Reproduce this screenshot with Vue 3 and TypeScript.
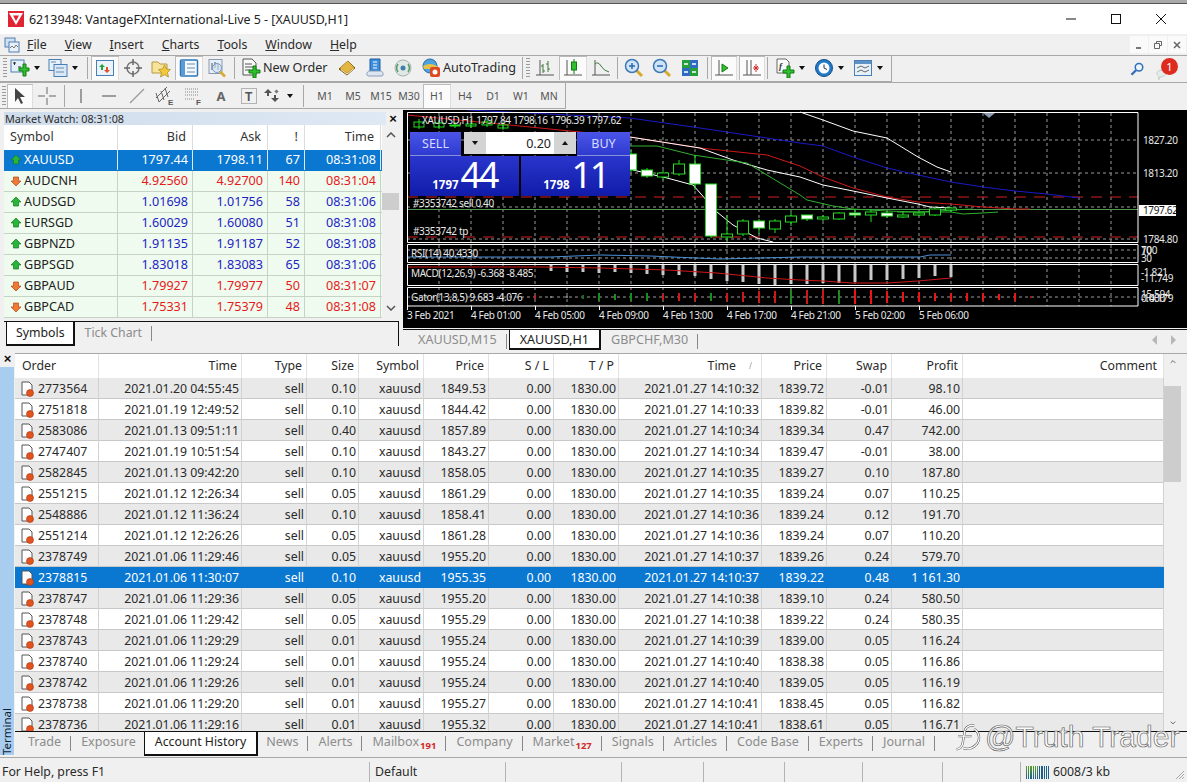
<script setup lang="ts">
const menus = [
  ['F', 'ile'], ['V', 'iew'], ['I', 'nsert'], ['C', 'harts'], ['T', 'ools'], ['W', 'indow'], ['H', 'elp'],
]
const periods = ['M1', 'M5', 'M15', 'M30', 'H1', 'H4', 'D1', 'W1', 'MN']

const quotes = [
  { s: 'XAUUSD', b: '1797.44', a: '1798.11', d: 67, t: '08:31:08', up: true, sel: true },
  { s: 'AUDCNH', b: '4.92560', a: '4.92700', d: 140, t: '08:31:04', up: false },
  { s: 'AUDSGD', b: '1.01698', a: '1.01756', d: 58, t: '08:31:06', up: true },
  { s: 'EURSGD', b: '1.60029', a: '1.60080', d: 51, t: '08:31:08', up: true },
  { s: 'GBPNZD', b: '1.91135', a: '1.91187', d: 52, t: '08:31:08', up: true },
  { s: 'GBPSGD', b: '1.83018', a: '1.83083', d: 65, t: '08:31:06', up: true },
  { s: 'GBPAUD', b: '1.79927', a: '1.79977', d: 50, t: '08:31:07', up: false },
  { s: 'GBPCAD', b: '1.75331', a: '1.75379', d: 48, t: '08:31:08', up: false },
]

// order, open time, size, price, close time, close price, swap, profit
const history = [
  ['2773564', '2021.01.20 04:55:45', '0.10', '1849.53', '14:10:32', '1839.72', '-0.01', '98.10'],
  ['2751818', '2021.01.19 12:49:52', '0.10', '1844.42', '14:10:33', '1839.82', '-0.01', '46.00'],
  ['2583086', '2021.01.13 09:51:11', '0.40', '1857.89', '14:10:34', '1839.34', '0.47', '742.00'],
  ['2747407', '2021.01.19 10:51:54', '0.10', '1843.27', '14:10:34', '1839.47', '-0.01', '38.00'],
  ['2582845', '2021.01.13 09:42:20', '0.10', '1858.05', '14:10:35', '1839.27', '0.10', '187.80'],
  ['2551215', '2021.01.12 12:26:34', '0.05', '1861.29', '14:10:35', '1839.24', '0.07', '110.25'],
  ['2548886', '2021.01.12 11:36:24', '0.10', '1858.41', '14:10:36', '1839.24', '0.12', '191.70'],
  ['2551214', '2021.01.12 12:26:26', '0.05', '1861.28', '14:10:36', '1839.24', '0.07', '110.20'],
  ['2378749', '2021.01.06 11:29:46', '0.05', '1955.20', '14:10:37', '1839.26', '0.24', '579.70'],
  ['2378815', '2021.01.06 11:30:07', '0.10', '1955.35', '14:10:37', '1839.22', '0.48', '1 161.30'],
  ['2378747', '2021.01.06 11:29:36', '0.05', '1955.20', '14:10:38', '1839.10', '0.24', '580.50'],
  ['2378748', '2021.01.06 11:29:42', '0.05', '1955.29', '14:10:38', '1839.22', '0.24', '580.35'],
  ['2378743', '2021.01.06 11:29:29', '0.01', '1955.24', '14:10:39', '1839.00', '0.05', '116.24'],
  ['2378740', '2021.01.06 11:29:24', '0.01', '1955.24', '14:10:40', '1838.38', '0.05', '116.86'],
  ['2378742', '2021.01.06 11:29:26', '0.01', '1955.24', '14:10:40', '1839.05', '0.05', '116.19'],
  ['2378738', '2021.01.06 11:29:20', '0.01', '1955.27', '14:10:41', '1838.45', '0.05', '116.82'],
  ['2378736', '2021.01.06 11:29:16', '0.01', '1955.32', '14:10:41', '1838.61', '0.05', '116.71'],
]

const termTabs = [
  { n: 'Trade' }, { n: 'Exposure' }, { n: 'Account History', on: true }, { n: 'News' }, { n: 'Alerts' },
  { n: 'Mailbox', c: '191' }, { n: 'Company' }, { n: 'Market', c: '127' }, { n: 'Signals' }, { n: 'Articles' },
  { n: 'Code Base' }, { n: 'Experts' }, { n: 'Journal' },
]

// chart, in page pixels (the svg viewBox starts at the chart's page corner)
const gridX = Array.from({ length: 22 }, (_, i) => 439 + i * 32)
const ticks = [
  [407, '3 Feb 2021'], [471, '4 Feb 01:00'], [535, '4 Feb 05:00'], [599, '4 Feb 09:00'], [663, '4 Feb 13:00'],
  [727, '4 Feb 17:00'], [791, '4 Feb 21:00'], [855, '5 Feb 02:00'], [919, '5 Feb 06:00'],
] as [number, string][]

const lines = [
  { c: '#ffffff', p: '800,112 823,120 853,131 887,138 918,157 937,167 951,172' },
  { c: '#1a1ac8', p: '467,110 630,118 700,128 800,143 823,146 853,157 887,168 918,175 951,182 983,187 1015,191 1047,194 1079,198' },
  { c: '#d01818', p: '407,115 520,126 630,137 700,148 767,155 800,166 823,177 853,188 887,197 918,202 951,204 983,207 1015,209 1030,209' },
  { c: '#ffffff', p: '630,137 700,148 733,160 767,170 800,177 823,185 853,191 887,198 918,204 930,207 951,208' },
  { c: '#ffffff', p: '633,170 667,178 693,185 717,212 733,225 757,238 773,242' },
  { c: '#30b030', p: '630,146 657,146 693,155 747,163 767,175 800,195 807,200 833,206 853,209 887,211 918,212 940,211 951,210 973,209' },
  { c: '#30b030', p: '897,212 951,212 963,214 983,213 998,212' },
]

// x, wick top, wick bottom, body top, body bottom, bull (white fill)
const candles: [number, number, number, number, number, boolean][] = [
  [631, 150, 172, 154, 170, true], [647, 168, 178, 170, 176, true], [663, 170, 180, 173, 177, false],
  [679, 160, 176, 164, 174, false], [695, 155, 190, 164, 184, true], [711, 184, 238, 184, 236, true],
  [727, 215, 241, 234, 237, false], [743, 219, 236, 221, 234, false], [759, 219, 234, 221, 228, true],
  [775, 219, 233, 221, 229, false], [791, 212, 226, 216, 222, false], [807, 215, 221, 215, 219, true],
  [823, 215, 221, 217, 219, false], [839, 212, 220, 213, 219, false], [855, 209, 217, 213, 215, true],
  [871, 209, 222, 212, 215, false], [887, 211, 218, 213, 216, true], [903, 211, 218, 215, 217, false],
  [919, 212, 216, 213, 215, false], [935, 207, 216, 209, 215, false], [951, 207, 212, 208, 210, false],
]
const topCandles = [[419, 122, 127], [439, 123, 127], [455, 125, 126], [471, 124, 126], [487, 122, 125], [503, 125, 128]]

const macd = [6, 7, 7, 8, 7, 8, 9, 10, 10, 11, 14, 16, 17, 19, 20, 19, 19, 18, 18, 17, 15, 15, 14, 13, 11, 12]
// x, half height, colour
const gator: [number, number, string][] = [
  [535, 2, '#c02020'], [551, 1, '#777'], [567, 1, '#777'], [583, 2, '#1c6b1c'], [599, 4, '#1c8b1c'],
  [615, 3, '#1c8b1c'], [631, 4, '#1c8b1c'], [647, 4, '#1c8b1c'], [663, 3, '#d01818'], [679, 4, '#d01818'],
  [695, 4, '#d01818'], [711, 4, '#1c8b1c'], [727, 4, '#d01818'], [743, 5, '#d01818'], [759, 6, '#d01818'],
  [775, 6, '#d01818'], [791, 7, '#1c8b1c'], [807, 7, '#d01818'], [823, 7, '#d01818'], [839, 7, '#1c8b1c'],
  [855, 7, '#ee1414'], [871, 7, '#ee1414'], [887, 6, '#ee1414'], [903, 5, '#ee1414'], [919, 5, '#ee1414'],
  [935, 4, '#ee1414'], [951, 4, '#ee1414'], [967, 4, '#ee1414'], [983, 4, '#ee1414'], [999, 3, '#ee1414'],
  [1015, 4, '#ee1414'], [1031, 1, '#a01818'],
]
const meterBars = Array.from({ length: 11 }, (_, i) => i)
</script>

<template>
  <div class="app">
    <div class="strip"></div>

    <header class="title">
      <svg class="logo" viewBox="0 0 16 16"><rect width="16" height="16" fill="#e02433" /><path d="M1 2h14L8 14zM5 4.500h6L8 10z" fill="#fff" fill-rule="evenodd" /></svg>
      <span>6213948: VantageFXInternational-Live 5 - [XAUUSD,H1]</span>
      <div class="winbtns">
        <svg viewBox="0 0 12 12"><path d="M1 6h10" stroke="#111" /></svg>
        <svg viewBox="0 0 12 12"><rect x="1.500" y="1.500" width="9" height="9" fill="none" stroke="#111" /></svg>
        <svg viewBox="0 0 12 12"><path d="M1 1l10 10M11 1L1 11" stroke="#111" /></svg>
      </div>
    </header>

    <nav class="menubar">
      <svg class="menu-ic" viewBox="0 0 16 16"><rect x="1" y="1" width="10" height="9" fill="#cfe0f2" stroke="#4f7fb0" /><rect x="5" y="5" width="10" height="10" fill="#e8f1fa" stroke="#4f7fb0" /><path d="M6 11l2-2 2 2 2-3 2 2" fill="none" stroke="#777" /></svg>
      <span v-for="m in menus" :key="m[0]" class="menu"><u>{{ m[0] }}</u>{{ m[1] }}</span>
      <div class="mdi">
        <span><svg viewBox="0 0 10 10"><path d="M2 8h5" stroke="#777" stroke-width="2" /></svg></span>
        <span><svg viewBox="0 0 10 10"><path d="M3.500 3V1.500h5v4H7M1.500 3.500h5v5h-5z" fill="none" stroke="#666" /></svg></span>
        <span><svg viewBox="0 0 10 10"><path d="M2 2l6 6M8 2L2 8" stroke="#666" stroke-width="1.500" /></svg></span>
      </div>
    </nav>

    <div class="bar-row">
      <div class="toolbar t1">
        <i class="grip"></i>
        <div class="tb w34">
          <svg viewBox="0 0 20 20"><rect x="1" y="2" width="13" height="12" fill="#e6f0fa" stroke="#4a7fb5" /><path d="M3 5h3M4.500 4v3M8 9h3" stroke="#333" /><path d="M10 9h4v-4h3v4h3v3h-3v5h-3v-5h-4z" transform="translate(-1 1)" fill="#2fc02f" stroke="#137a13" /></svg>
          <b class="drop"></b>
        </div>
        <div class="tb w40">
          <svg viewBox="0 0 20 20"><rect x="1" y="1.500" width="12" height="11" fill="#e6f0fa" stroke="#4a7fb5" /><rect x="6" y="6.500" width="13" height="12" fill="#d8e8f8" stroke="#4a7fb5" /><path d="M3 4h5M8 10h8M8 14h8" stroke="#6a8aaa" /></svg>
          <b class="drop"></b>
        </div>
        <i class="sep"></i>
        <div class="tb on">
          <svg viewBox="0 0 20 20"><rect x="1.500" y="2.500" width="17" height="15" fill="#eaf3fb" stroke="#4a7fb5" /><path d="M7 6l3 3H8v3H6V9H4z" fill="#1fa53a" /><path d="M12 15l-3-3h2V9h2v3h2z" fill="#e2502a" /></svg>
        </div>
        <div class="tb">
          <svg viewBox="0 0 20 20"><circle cx="10" cy="10" r="6" fill="none" stroke="#777" stroke-width="1.500" /><path d="M10 1v6M10 13v6M1 10h6M13 10h6" stroke="#666" stroke-width="1.500" /></svg>
        </div>
        <div class="tb">
          <svg viewBox="0 0 20 20"><path d="M1 4h6l2 2h7v9H1z" fill="#f7e39a" stroke="#b79a45" /><path d="M13.500 7l2 4 4 .500-3 3 1 4.500-4-2.300-4 2.300 1-4.500-3-3 4-.5z" fill="#f4c83a" stroke="#a98a20" stroke-width=".7" /></svg>
        </div>
        <div class="tb on">
          <svg viewBox="0 0 20 20"><rect x="1.500" y="2" width="17" height="16" rx="1" fill="#f4f9fe" stroke="#2f76b8" stroke-width="1.500" /><path d="M2 2.500h4v15H2z" fill="#5a9ad6" /><path d="M8 6h8M8 10h8M8 14h8" stroke="#6c8aa8" /></svg>
        </div>
        <div class="tb">
          <svg viewBox="0 0 20 20"><rect x="2" y="1.500" width="13" height="14" fill="#e8eef6" stroke="#8a9ab0" /><path d="M5 5v7M8 4v6M11 6v6" stroke="#555" /><circle cx="10" cy="10" r="4.500" fill="#d0e4f6" fill-opacity=".6" stroke="#6f9cc8" /><path d="M13 13.500l5 5" stroke="#d7a92e" stroke-width="2.500" /></svg>
        </div>
        <i class="sep"></i>
        <div class="tb label w95">
          <svg viewBox="0 0 20 20"><path d="M2 1h9l4 4v12H2z" fill="#f8f8f8" stroke="#555" /><path d="M4 6h7M4 9h9M4 12h5" stroke="#555" /><path d="M8 11h4V7h3v4h4v3h-4v5h-3v-5H8z" transform="translate(0 1)" fill="#2fc02f" stroke="#137a13" /></svg>
          <span>New Order</span>
        </div>
        <div class="tb">
          <svg viewBox="0 0 20 20"><path d="M11 3l7 7-8 7-8-6z" fill="#9a7420" stroke="#7a5a14" /><path d="M11 3l6 6.500-7 5.500-7-5z" fill="#e3b543" /><path d="M4 11.500l6 4.500 7-5.500" fill="none" stroke="#fff2c0" /></svg>
        </div>
        <div class="tb">
          <svg viewBox="0 0 20 20"><path d="M5 1h10v12H5z" fill="#3d8fdd" stroke="#1c5da0" /><path d="M8 4h4M8 7h4M8 10h4" stroke="#fff" /><path d="M2 17a3 3 0 0 1 3-4h10a3 3 0 0 1 3 4q0 1-2 1H4q-2 0-2-1z" fill="#dbe6f2" stroke="#8aa0b8" /></svg>
        </div>
        <div class="tb">
          <svg viewBox="0 0 20 20"><circle cx="10" cy="10" r="8" fill="#dfe8e4" stroke="#a4b4ac" /><path d="M5 6a7 7 0 0 0 0 8M15 6a7 7 0 0 1 0 8" fill="none" stroke="#5a9a6a" stroke-width="1.500" /><circle cx="10" cy="10" r="2.500" fill="#3f7fb0" /></svg>
        </div>
        <div class="tb label w102">
          <svg viewBox="0 0 20 20"><circle cx="9" cy="8" r="7" fill="#4da3dd" stroke="#2b6a9e" /><path d="M2 8q7-4 14 0l-1 3H3z" fill="#e7c24a" /><rect x="9" y="9" width="10" height="10" rx="2" fill="#e0481f" /><circle cx="14" cy="14" r="2.500" fill="#fff" /></svg>
          <span>AutoTrading</span>
        </div>
        <i class="sep"></i>
        <i class="grip thin"></i>
        <div class="tb">
          <svg viewBox="0 0 20 20"><path d="M5 2v15M1 17h18" stroke="#555" /><path d="M8 6v9M6 8h2M8 13h2M13 3v11M11 6h2M13 11h2" stroke="#3a7a3a" /></svg>
        </div>
        <div class="tb on">
          <svg viewBox="0 0 20 20"><path d="M4 2v15M1 17h18" stroke="#555" /><path d="M11 1v15" stroke="#137a13" /><rect x="8.500" y="4" width="5" height="8" fill="#2fc02f" stroke="#137a13" /></svg>
        </div>
        <div class="tb">
          <svg viewBox="0 0 20 20"><path d="M4 2v15M1 17h18" stroke="#555" /><path d="M4 6q3-3 6 2t8 6" fill="none" stroke="#3a7a3a" /></svg>
        </div>
        <i class="sep n"></i>
        <div class="tb">
          <svg viewBox="0 0 20 20"><path d="M12 12l6 6" stroke="#d7a92e" stroke-width="3" /><circle cx="8" cy="8" r="6.500" fill="#cfe4f8" stroke="#3d78b5" stroke-width="1.500" /><path d="M5 8h6M8 5v6" stroke="#2b68a8" stroke-width="1.500" /></svg>
        </div>
        <div class="tb">
          <svg viewBox="0 0 20 20"><path d="M12 12l6 6" stroke="#d7a92e" stroke-width="3" /><circle cx="8" cy="8" r="6.500" fill="#cfe4f8" stroke="#3d78b5" stroke-width="1.500" /><path d="M5 8h6" stroke="#2b68a8" stroke-width="1.500" /></svg>
        </div>
        <div class="tb">
          <svg viewBox="0 0 20 20"><rect x="2" y="2" width="8" height="8" fill="#26a03a" /><rect x="10" y="2" width="8" height="8" fill="#2d6cc0" /><rect x="2" y="10" width="8" height="8" fill="#2d6cc0" /><rect x="10" y="10" width="8" height="8" fill="#26a03a" /><path d="M4 6h4M12 6h4M4 14h4M12 14h4" stroke="#fff" stroke-width="1.500" /></svg>
        </div>
        <i class="sep"></i>
        <div class="tb on w26">
          <svg viewBox="0 0 20 20"><path d="M5 2v15M1 17h18" stroke="#555" /><path d="M8 6l6 4-6 4z" fill="#2fc02f" stroke="#137a13" /></svg>
        </div>
        <div class="tb on w26 mleft">
          <svg viewBox="0 0 20 20"><path d="M5 2v15M1 17h18M9 2v15" stroke="#555" /><path d="M14 6v8M11 10h6M12 8l4 4M16 8l-4 4" stroke="#c82a2a" /></svg>
        </div>
        <i class="sep n"></i>
        <div class="tb w39">
          <svg viewBox="0 0 20 20"><path d="M2 1h9l3 3v11H2z" fill="#fafafa" stroke="#666" /><text x="4" y="11" class="fx">f</text><path d="M9 11h4V7h3v4h4v3h-4v5h-3v-5H9z" transform="translate(-1 1)" fill="#2fc02f" stroke="#137a13" /></svg>
          <b class="drop"></b>
        </div>
        <div class="tb w39">
          <svg viewBox="0 0 20 20"><circle cx="10" cy="10" r="8.500" fill="#1f78c8" stroke="#12508c" /><circle cx="10" cy="10" r="5.500" fill="#f8fbff" /><path d="M10 6.500V10l3 1.500" fill="none" stroke="#333" /></svg>
          <b class="drop"></b>
        </div>
        <div class="tb w39">
          <svg viewBox="0 0 20 20"><rect x="1.500" y="2.500" width="17" height="15" fill="#e8f1f8" stroke="#4a7fb5" /><path d="M2 3h16v3H2z" fill="#5d93c6" /><path d="M4 10l4-2 4 2 4-2M4 14l4-2 4 2 4-2" fill="none" stroke="#666" /></svg>
          <b class="drop"></b>
        </div>
      </div>
      <div class="tray">
        <svg class="tray-s" viewBox="0 0 20 20"><circle cx="12" cy="7" r="5" fill="#eef5fc" stroke="#2f6fb8" stroke-width="2" /><path d="M8 11l-6 6" stroke="#2f6fb8" stroke-width="3" /></svg>
        <div class="bubble">
          <svg viewBox="0 0 24 24"><path d="M2 12a7 6 0 0 1 13 0 7 6 0 0 1-8 5l-2 4v-5a6 6 0 0 1-3-4z" fill="#e4ecec" stroke="#b8c4c4" /></svg>
          <span>1</span>
        </div>
      </div>
    </div>

    <div class="bar-row">
      <div class="toolbar t2">
        <i class="grip small"></i>
        <div class="tb on w26">
          <svg viewBox="0 0 20 20"><path d="M5 2l10 9h-5l3 6-2 1-3-6-3 4z" fill="#444" /></svg>
        </div>
        <div class="tb">
          <svg viewBox="0 0 20 20"><path d="M10 1v7M10 12v7M1 10h7M12 10h7" stroke="#666" /></svg>
        </div>
        <i class="sep line6"></i>
        <div class="tb"><svg viewBox="0 0 20 20"><path d="M10 3v14" stroke="#666" stroke-width="1.200" /></svg></div>
        <div class="tb"><svg viewBox="0 0 20 20"><path d="M3 10h14" stroke="#666" stroke-width="1.200" /></svg></div>
        <div class="tb"><svg viewBox="0 0 20 20"><path d="M3 17L17 3" stroke="#999" stroke-width="1.200" /></svg></div>
        <div class="tb">
          <svg viewBox="0 0 20 20"><path d="M1 12L12 1M4 16L15 5M1 7l3 9M6 5l3 9M10 2l3 9" stroke="#666" /><text x="13" y="19" class="mini">E</text></svg>
        </div>
        <div class="tb">
          <svg viewBox="0 0 20 20"><path d="M2 3h14M2 6h14M2 9h14M2 13h10" stroke="#888" stroke-dasharray="1 1" /><text x="13" y="19" class="mini">F</text></svg>
        </div>
        <div class="tb"><span class="tool-a">A</span></div>
        <div class="tb">
          <svg viewBox="0 0 20 20"><rect x="2.500" y="2.500" width="15" height="15" fill="none" stroke="#777" stroke-dasharray="1 1" /><text x="6" y="15" class="tool-t">T</text></svg>
        </div>
        <div class="tb w38">
          <svg viewBox="0 0 20 20"><path d="M5 3l4 4H6v3H4V7H1z" fill="#555" /><path d="M12 16l-4-4h3V9h2v3h3z" fill="#555" /><rect x="12" y="4" width="3" height="3" transform="rotate(45 13.500 5.500)" fill="#777" /></svg>
          <b class="drop"></b>
        </div>
        <i class="sep wide"></i>
        <div v-for="p in periods" :key="p" class="tb period" :class="{ on: p === 'H1' }">{{ p }}</div>
      </div>
    </div>

    <section class="upper">
      <div class="market">
        <div class="caption">
          <span>Market Watch: 08:31:08</span>
          <b class="x">×</b>
        </div>
        <div class="mw-wrap">
          <div class="mw-table">
            <div class="mw-row mw-head">
              <span class="left">Symbol</span><span>Bid</span><span>Ask</span><span>!</span><span>Time</span>
            </div>
            <div v-for="q in quotes" :key="q.s" class="mw-row" :class="[q.up ? 'blue' : 'red', { sel: q.sel }]">
              <span class="left sym">
                <svg viewBox="0 0 12 12">
                  <path v-if="q.up" d="M6 1l5 5H8.500v4h-5V6H1z" fill="#29b53a" stroke="#137a22" stroke-width=".7" />
                  <path v-else d="M6 11L1 6h2.500V2h5v4H11z" fill="#ef7a36" stroke="#b5461a" stroke-width=".7" />
                </svg>
                <em>{{ q.s }}</em>
              </span>
              <span>{{ q.b }}</span><span>{{ q.a }}</span><span>{{ q.d }}</span><span>{{ q.t }}</span>
            </div>
          </div>
          <div class="vscroll mw-scroll">
            <svg viewBox="0 0 10 6"><path d="M1 5l4-4 4 4" fill="none" stroke="#555" stroke-width="1.500" /></svg>
            <div class="track"><div class="thumb"></div></div>
            <svg viewBox="0 0 10 6"><path d="M1 1l4 4 4-4" fill="none" stroke="#555" stroke-width="1.500" /></svg>
          </div>
        </div>
        <div class="tabs mw-tabs">
          <span class="tab on">Symbols</span>
          <span class="tab">Tick Chart</span>
        </div>
      </div>

      <div class="chart-col">
        <div class="chart">
          <svg class="plot" viewBox="403 110 784 218">
            <g class="grid">
              <line v-for="x in gridX" :key="x" :x1="x" :x2="x" y1="113" y2="306" />
              <line v-for="y in [140, 173, 207, 239, 250, 258, 297]" :key="y" x1="407" x2="1138" :y1="y" :y2="y" />
            </g>
            <path d="M407 197H1138M407 237H1138" stroke="#d02020" stroke-dasharray="11 8" />
            <path d="M407 209.500H1138" stroke="#4f9a4f" />
            <polyline v-for="(l, i) in lines" :key="i" :points="l.p" fill="none" :stroke="l.c" />
            <g v-for="t in topCandles" :key="t[0]" stroke="#22dd22">
              <rect :x="t[0] - 5" :y="t[1]" width="10" :height="t[2] - t[1]" fill="none" />
              <path :d="`M${t[0]} ${t[1] - 3}V${t[2] + 2}`" />
            </g>
            <g v-for="c in candles" :key="c[0]" stroke="#22dd22">
              <path :d="`M${c[0]} ${c[1]}V${c[2]}`" />
              <rect :x="c[0] - 5.500" :y="c[3]" width="11" :height="c[4] - c[3]" :fill="c[5] ? '#fff' : '#000'" />
            </g>
            <path d="M407 257H550L600 255 650 256 720 259 800 257 920 257 930 255H951" fill="none" stroke="#4a90d8" />
            <rect v-for="(h, i) in macd" :key="i" :x="549.500 + i * 16" y="265" width="3" :height="h" fill="#c8c8c8" />
            <polyline points="407,267 543,267 600,268 667,270 717,273 767,278 800,280 823,281 853,283 887,283 918,281 951,278" fill="none" stroke="#d01818" />
            <rect v-for="g in gator" :key="g[0]" :x="g[0] - 1" :y="297 - g[1]" width="2" :height="g[1] * 2" :fill="g[2]" />
            <path d="M407.500 112.500H1138V242.500H407.500zM407.500 244.500H1138V262.500H407.500zM407.500 264.500H1138V285.500H407.500zM407.500 287.500H1138V306H407.500z" fill="none" stroke="#fff" />
            <path d="M983 113l6 5 6-5z" fill="#8a9ab0" />

            <g class="lbl">
              <text x="422" y="124">XAUUSD,H1  1797.84 1798.16 1796.39 1797.62</text>
              <text x="413" y="207">#3353742 sell 0.40</text>
              <text x="413" y="235">#3353742 tp</text>
              <text x="411" y="257">RSI(14) 40.4330</text>
              <text x="411" y="277">MACD(12,26,9) -6.368 -8.485</text>
              <text x="411" y="301">Gator(13,8,5) 9.683 -4.076</text>
              <text x="1143" y="144">1827.20</text>
              <text x="1143" y="177">1813.20</text>
              <text x="1143" y="243">1784.80</text>
              <text x="1141" y="254">100</text>
              <text x="1141" y="254">70</text>
              <text x="1141" y="262">30</text>
              <text x="1141" y="276">-1.821</text>
              <text x="1141" y="282">-11.749</text>
              <text x="1141" y="298">15.594</text>
              <text x="1141" y="302">0.000</text>
              <text x="1141" y="302">-14.179</text>
              <g v-for="t in ticks" :key="t[1]">
                <path :d="`M${t[0] + 0.500} 306v4`" stroke="#fff" />
                <text :x="t[0]" y="319">{{ t[1] }}</text>
              </g>
            </g>
            <rect x="1139" y="205" width="37" height="11" fill="#fff" />
            <text x="1143" y="214" class="lbl dark">1797.62</text>
          </svg>

          <div class="oneclick">
            <div class="oc-top">
              <div class="oc-btn">SELL</div>
              <div class="oc-vol">
                <span class="spin"><b class="drop"></b></span>
                <span class="vol">0.20</span>
                <span class="spin"><b class="drop up"></b></span>
              </div>
              <div class="oc-btn buy">BUY</div>
            </div>
            <div class="oc-prices">
              <div class="oc-price"><small>1797</small><strong>44</strong></div>
              <div class="oc-price b"><small>1798</small><strong>11</strong></div>
            </div>
          </div>
        </div>
        <div class="tabs chart-tabs">
          <span class="tab">XAUUSD,M15</span>
          <span class="tab on">XAUUSD,H1</span>
          <span class="tab">GBPCHF,M30</span>
          <div class="arrows">
            <svg viewBox="0 0 6 10"><path d="M5 0v10L0 5z" fill="#b8b8b8" /></svg>
            <svg viewBox="0 0 6 10"><path d="M1 0v10l5-5z" fill="#b8b8b8" /></svg>
          </div>
        </div>
      </div>
    </section>

    <section class="terminal">
      <aside class="side">
        <b class="x">×</b>
        <div class="side-bar"><span>Terminal</span></div>
      </aside>
      <div class="term-main">
        <div class="term-body">
          <div class="table">
            <div class="row head">
              <span class="left">Order</span><span>Time</span><span>Type</span><span>Size</span><span>Symbol</span>
              <span>Price</span><span>S / L</span><span>T / P</span><span class="sorted">Time</span><span>Price</span>
              <span>Swap</span><span>Profit</span><span>Comment</span>
            </div>
            <div v-for="(r, i) in history" :key="r[0]" class="row" :class="{ alt: i % 2 === 0, sel: r[0] === '2378815' }">
              <span class="left ord">
                <svg viewBox="0 0 16 16"><path d="M3 1h7l3 3v10H3z" fill="#fff" stroke="#555" /><circle cx="11" cy="12" r="3.500" fill="#e2531f" stroke="#a8380f" stroke-width=".6" /></svg>
                {{ r[0] }}
              </span>
              <span>{{ r[1] }}</span><span>sell</span><span>{{ r[2] }}</span><span>xauusd</span><span>{{ r[3] }}</span>
              <span>0.00</span><span>1830.00</span><span>2021.01.27 {{ r[4] }}</span><span>{{ r[5] }}</span>
              <span>{{ r[6] }}</span><span>{{ r[7] }}</span><span></span>
            </div>
          </div>
          <div class="vscroll term-scroll">
            <svg viewBox="0 0 10 6"><path d="M1 5l4-4 4 4" fill="none" stroke="#555" stroke-width="1.500" /></svg>
            <div class="track"><div class="thumb"></div></div>
            <svg viewBox="0 0 10 6"><path d="M1 1l4 4 4-4" fill="none" stroke="#555" stroke-width="1.500" /></svg>
          </div>
        </div>
        <div class="tabs term-tabs">
          <span v-for="t in termTabs" :key="t.n" class="tab" :class="{ on: t.on }">{{ t.n }}<sub v-if="t.c">{{ t.c }}</sub></span>
        </div>
      </div>
    </section>

    <footer class="status">
      <span>For Help, press F1</span>
      <span>Default</span>
      <span></span><span></span><span></span><span></span><span></span><span></span>
      <span class="meter">
        <i class="bars"><i v-for="b in meterBars" :key="b" :class="{ g: b < 6 }"></i></i>
        6008/3 kb
      </span>
      <svg class="size-grip" viewBox="0 0 12 12"><path d="M11 3l-8 8M11 6l-5 5M11 9l-2 2" stroke="#aaa" /></svg>
    </footer>

    <div class="watermark">
      <svg viewBox="0 0 34 34">
        <path d="M24 4Q14 3 13 12L11 24Q10 30 4 31M6 16h15M24 8a13 12 0 0 1 2 18Q20 32 12 30" fill="none" stroke="#555" stroke-width="2.600" />
        <path d="M24 4Q14 3 13 12L11 24Q10 30 4 31M6 16h15M24 8a13 12 0 0 1 2 18Q20 32 12 30" fill="none" stroke="#fff" stroke-width="1.400" />
      </svg>
      <span>@Truth Trader</span>
    </div>
  </div>
</template>

<style>
html, body { margin: 0; background: #f0f0f0; }
</style>

<style scoped>
.app {
  position: relative;
  width: 1187px;
  height: 782px;
  overflow: hidden;
  background: #f0f0f0;
  color: #2a2a2a;
  font: 12.3px "Noto Sans", "Open Sans", sans-serif;
}
.strip { height: 3px; background: #a9a9a9; border-bottom: 1px solid #555; }

.title { display: flex; align-items: center; height: 30px; background: #fff; padding-left: 8px; color: #222; font-size: 12.45px; }
.logo { width: 16px; height: 16px; margin-right: 5px; }
.winbtns { display: flex; margin-left: auto; gap: 33px; padding-right: 20px; }
.winbtns svg { width: 12px; height: 12px; }

.menubar { position: relative; display: flex; align-items: center; height: 21px; }
.menu-ic { width: 16px; height: 16px; margin: 0 7px 0 4px; }
.menu { margin-right: 18px; font-size: 12.3px; }
.mdi { display: flex; gap: 1px; margin-left: auto; padding-right: 1px; }
.mdi span { display: flex; align-items: center; justify-content: center; width: 18px; height: 17px; background: #fafafa; }
.mdi svg { width: 10px; height: 10px; }

.bar-row { display: flex; height: 27px; border-top: 1px solid #a8a8a8; box-sizing: border-box; }
.toolbar { display: flex; align-items: center; height: 26px; border-right: 1px solid #a8a8a8; border-bottom: 1px solid #a8a8a8; box-sizing: border-box; }
.t1 { width: 892px; padding-bottom: 2px; }
.t2 { width: 566px; }
.grip { width: 10px; height: 20px; flex: none; background: repeating-linear-gradient(#9a9a9a 0 1px, transparent 1px 3px) 3px 0 / 4px 100% no-repeat; }
.grip.thin { width: 5px; background-position: 0 0; }
.grip.small { width: 7px; background-position: 2px 0; }
.sep { flex: none; width: 7px; height: 22px; background: linear-gradient(#a8a8a8, #a8a8a8) center / 1px 100% no-repeat; }
.sep.n { width: 5px; }
.sep.line6 { width: 6px; }
.sep.wide { width: 10px; background-position: 2px 0; }

.tb { display: flex; flex: none; align-items: center; justify-content: center; box-sizing: border-box; width: 28px; height: 24px; }
.tb svg { flex: none; width: 20px; height: 20px; }
.tb.on { background: #fbfbfb; box-shadow: inset 1px 1px 0 #bbb, inset -1px 0 0 #ddd; }
.w26 { width: 26px; }
.mleft { margin-left: 2px; }
.w34, .w40, .w39, .w38 { justify-content: flex-start; }
.w34 { width: 34px; }
.w40 { width: 40px; padding-left: 4px; }
.w39 { width: 39px; padding-left: 5px; }
.w38 { width: 38px; }
.w95 { width: 95px; }
.w102 { width: 102px; }
.label { justify-content: flex-start; gap: 2px; font-size: 12.6px; }
.w95 { padding-left: 3px; }
.w102 { padding-left: 4px; }
.drop { flex: none; width: 0; height: 0; margin-left: 4px; border: 3.500px solid transparent; border-top: 4px solid #111; border-bottom: 0; }
.drop.up { margin: 0; border-top: 0; border-bottom: 4px solid #111; }
.period { color: #555; font-size: 10.5px; }
.tool-a { color: #666; font-size: 13px; font-weight: 700; }
.fx { font: italic 700 9px "Liberation Serif", serif; fill: #333; }
.mini { font: 700 8px "Liberation Sans", sans-serif; fill: #555; }
.tool-t { font: 700 12px "Liberation Sans", sans-serif; fill: #555; }

.tray { display: flex; align-items: center; margin-left: auto; padding-right: 8px; gap: 10px; height: 26px; }
.tray-s { width: 15px; height: 15px; }
.bubble { position: relative; width: 24px; height: 24px; }
.bubble svg { position: absolute; left: 0; top: 7px; width: 18px; height: 18px; }
.bubble span { position: absolute; left: 6px; top: 1px; width: 17px; height: 17px; border-radius: 50%; background: #dd2c1f; color: #fff; font-size: 11px; line-height: 17px; text-align: center; }

.upper { display: flex; height: 240px; margin-top: 1px; }
.market { display: flex; flex-direction: column; flex: none; box-sizing: border-box; width: 400px; padding: 2px 1px 0 4px; }
.caption { display: flex; align-items: center; justify-content: space-between; height: 13px; background: linear-gradient(90deg, #cfdceb, #dfe9f4); font-size: 10.8px; line-height: 13px; }
.caption span { padding-left: 1px; }
.caption .x { width: 14px; margin-right: -1px; background: #f0f0f0; text-align: center; }
.x { color: #111; font: 700 13px "Liberation Sans", sans-serif; }

.mw-wrap { display: flex; height: 193px; background: #fff; }
.mw-table { width: 378px; overflow: hidden; }
.mw-row { display: grid; grid-template-columns: 114px 75px 75px 37px 76px; height: 21px; box-sizing: border-box; background: #effbef; border-bottom: 1px solid #c5d2c5; line-height: 20px; font-size: 12.6px; }
.mw-row span { box-sizing: border-box; padding-right: 4px; border-right: 1px solid #c5d2c5; text-align: right; white-space: nowrap; }
.mw-row span.left { padding-left: 6px; text-align: left; }
.mw-head { height: 25px; background: #fff; border-bottom: 0; color: #333; line-height: 24px; }
.mw-head span { border-right-color: #dcdcdc; padding-right: 6px; }
.blue span { color: #2323c4; }
.red span { color: #e61a1a; }
.mw-row span.sym { display: flex; align-items: center; color: #222; }
.sym svg { width: 12px; height: 12px; margin-right: 2px; }
.sym em { font-style: normal; color: #222; }
.mw-row.sel { background: #0a77d0; border-bottom-color: #0a77d0; }
.mw-row.sel span, .mw-row.sel em { color: #fff; border-right-color: #dce8f4; }

.vscroll { display: flex; flex-direction: column; align-items: center; flex: none; background: #f0f0f0; }
.vscroll > svg { width: 10px; height: 6px; margin: 7px 0; }
.track { flex: 1; align-self: stretch; }
.thumb { background: #cdcdcd; }
.mw-scroll { width: 17px; }
.mw-scroll .thumb { height: 17px; margin-top: 48px; }

.tabs { display: flex; box-sizing: border-box; border-top: 1px solid #111; }
.tab { position: relative; padding: 0 10px; color: #8c8c8c; white-space: nowrap; line-height: 21px; }
.tab:not(.on)::after { content: ""; position: absolute; right: 0; top: 4px; height: 15px; border-right: 1px solid #888; }
.tab.on { background: #fff; color: #222; border: 1px solid #111; border-width: 0 2px 2px 1px; }
.mw-tabs { height: 25px; margin-top: 3px; padding-left: 2px; border-right: 1px solid #111; }
.mw-tabs .tab.on { padding: 0 8px 0 9px; }
.mw-tabs .tab + .tab { padding-left: 10px; }

.chart-col { display: flex; flex-direction: column; flex: 1; margin-left: 3px; }
.chart { position: relative; height: 218px; background: #000; }
.plot { display: block; width: 784px; height: 218px; }
.grid line { stroke: #9a9a9a; stroke-dasharray: 3 3; }
.lbl text, .lbl.dark { fill: #e8e8e8; font-size: 10px; letter-spacing: -.35px; font-family: "Noto Sans", sans-serif; white-space: pre; }
.lbl.dark { fill: #111; }

.oneclick { position: absolute; left: 7px; top: 22px; width: 220px; color: #fff; }
.oc-top { display: flex; height: 24px; }
.oc-btn { width: 51px; height: 24px; background: linear-gradient(#4a55e8, #2f3ad0); border-bottom: 1px solid #8a90d8; font-size: 12.5px; line-height: 24px; text-align: center; color: #d8dcff; box-sizing: border-box; }
.oc-btn.buy { width: 53px; margin-left: auto; }
.oc-vol { display: flex; align-items: center; width: 112px; height: 22px; margin-left: 3px; background: #fff; color: #222; font-size: 12.5px; }
.spin { display: flex; align-items: center; justify-content: center; width: 22px; height: 22px; background: #d4d4d4; }
.spin .drop { margin: 0; }
.vol { flex: 1; padding-right: 3px; text-align: right; }
.oc-prices { display: flex; gap: 2px; height: 40px; }
.oc-price { display: flex; align-items: flex-end; justify-content: center; width: 109px; background: linear-gradient(#2a36cc, #101ba8); font-size: 36px; box-sizing: border-box; line-height: 42px; }
.oc-price small { margin: 0 2px 3px 0; font-size: 11.5px; font-weight: 700; line-height: 16px; }
.oc-price strong { font-weight: 400; letter-spacing: -2.5px; }

.chart-tabs { position: relative; height: 21px; margin-top: 1px; padding-left: 5px; font-size: 12.6px; }
.chart-tabs .tab { line-height: 19px; }
.chart-tabs .tab.on { margin-left: 2px; }
.arrows { position: absolute; top: 5px; right: 11px; display: flex; gap: 12px; }
.arrows svg { width: 6px; height: 10px; }

.terminal { display: flex; height: 407px; }
.side { display: flex; flex-direction: column; flex: none; width: 15px; }
.side .x { height: 17px; line-height: 17px; text-align: center; }
.side-bar { display: flex; flex: 1; align-items: flex-end; justify-content: center; width: 14px; margin-bottom: 2px; background: #a9cdee; }
.side-bar span { writing-mode: vertical-rl; transform: rotate(180deg); color: #123; font-size: 11.5px; line-height: 14px; }

.term-main { display: flex; flex-direction: column; flex: 1; min-width: 0; }
.term-body { display: flex; height: 378px; margin-top: 3px; border-top: 1px solid #a8a8a8; box-sizing: border-box; }
.table { width: 1149px; overflow: hidden; background: #fff; }
.row { display: grid; grid-template-columns: 84px 143px 65px 52px 65px 65px 65px 65px 143px 65px 65px 71px 201px; height: 21px; box-sizing: border-box; border-bottom: 1px solid #c8c8c8; background: #fff; line-height: 21px; }
.row span { box-sizing: border-box; padding-right: 2px; border-right: 1px solid #d2d2d2; text-align: right; white-space: nowrap; }
.row span.left { padding-left: 7px; text-align: left; }
.head { height: 24px; background: #fff; border-bottom: 0; line-height: 23px; }
.head span { padding-right: 4px; border-right-color: #e2e2e2; }
.head span:last-child { padding-right: 6px; }
.head .sorted { position: relative; padding-right: 25px; }
.head .sorted::after { content: "/"; position: absolute; right: 9px; top: 0; color: #999; font-size: 8px; }
.row.alt { background: #e9e9e9; }
.row.sel, .row.sel.alt { background: #0a77d0; border-bottom-color: #0a77d0; color: #fff; }
.row.sel span { border-right-color: #0a77d0; }
.row span.ord { display: flex; align-items: center; gap: 3px; padding-left: 4px; }
.ord svg { width: 16px; height: 16px; }
.term-scroll { width: 17px; }
.term-scroll .thumb { height: 96px; margin-top: 15px; }
.term-scroll .track { flex: none; height: 343px; }
.term-scroll > svg:first-child { margin-top: 6px; }

.term-tabs { position: relative; height: 26px; padding-left: 3px; font-size: 12.55px; }
.term-tabs .tab { line-height: 20px; }
.term-tabs .tab.on { margin: 0 -2px; font-size: 12.3px; height: 22px; }
.term-tabs sub { margin-left: 1px; color: #d12a2a; font-size: 9.5px; font-weight: 700; line-height: 0; vertical-align: -3px; }

.status { display: grid; grid-template-columns: 370px 136px 116px 82px 81px 78px 80px 78px 1fr; height: 25px; border-top: 1px solid #a8a8a8; box-sizing: border-box; }
.status span { padding-left: 5px; border-right: 1px solid #b4b4b4; margin-top: 4px; line-height: 20px; }
.status span:first-child { padding-left: 2px; }
.status .meter { display: flex; align-items: center; gap: 4px; padding-left: 5px; border-right: 0; }
.bars { display: flex; align-items: flex-end; gap: 1px; width: 23px; height: 13px; }
.bars i { width: 1px; flex: 1; height: 100%; background: #1c5e8c; }
.bars i.g { background: linear-gradient(#5fa02a, #1c5e8c); }
.size-grip { position: absolute; right: 2px; bottom: 2px; width: 12px; height: 12px; }

.watermark { position: absolute; left: 953px; top: 720px; display: flex; align-items: center; gap: 2px; pointer-events: none; }
.watermark svg { width: 30px; height: 34px; }
.watermark span { color: rgba(255, 255, 255, .9); font: 30px "Liberation Sans", sans-serif; -webkit-text-stroke: .7px #666; white-space: nowrap; }
</style>
